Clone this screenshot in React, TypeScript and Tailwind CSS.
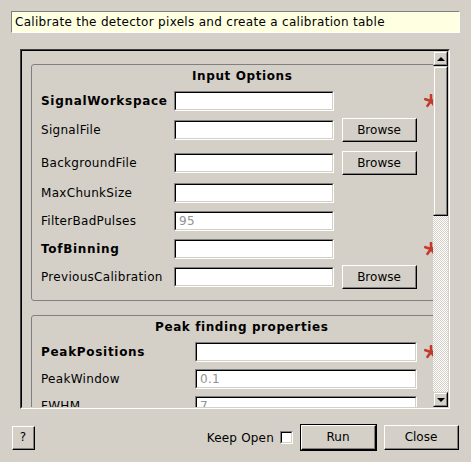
import React from "react";

function Star() {
  const arms = [-90, -18, 54, 126, 198];
  return (
    <svg width="14" height="14" viewBox="0 0 14 14" className="shrink-0 block">
      <g stroke="#c4392b" strokeWidth="2.6" strokeLinecap="round">
        {arms.map((a) => {
          const r = (a * Math.PI) / 180;
          return <line key={a} x1={7} y1={7} x2={7 + Math.cos(r) * 6} y2={7 + Math.sin(r) * 6} />;
        })}
      </g>
    </svg>
  );
}

function Input({ w, value }: { w: string; value?: string }) {
  return (
    <div className={`${w} h-[20px] shrink-0 border border-t-[#808080] border-l-[#808080] border-r-white border-b-white`}>
      <div className="w-full h-full border border-t-black border-l-black border-r-[#d4d0c8] border-b-[#d4d0c8] bg-white flex items-center pl-[3px] text-[#929292] tracking-[0.3px]">
        {value}
      </div>
    </div>
  );
}

function Button({ w, h, label, def }: { w: string; h: string; label: string; def?: boolean }) {
  const inner = (
    <div className="w-full h-full border border-t-white border-l-white border-r-black border-b-black">
      <div className="w-full h-full border-r border-b border-[#808080] flex items-center justify-center">{label}</div>
    </div>
  );
  if (def) {
    return <div className={`${w} ${h} shrink-0 border border-black`}>{inner}</div>;
  }
  return <div className={`${w} ${h} shrink-0`}>{inner}</div>;
}

function Row({
  label,
  bold,
  mt,
  labelW,
  inputW,
  value,
  browse,
  star,
}: {
  label: string;
  bold?: boolean;
  mt: string;
  labelW: string;
  inputW: string;
  value?: string;
  browse?: boolean;
  star?: boolean;
}) {
  return (
    <div className={`${mt} h-[24px] flex items-center shrink-0`}>
      <div className={`${labelW} shrink-0 whitespace-nowrap ${bold ? "font-bold tracking-[0.7px]" : "tracking-[0.3px]"}`}>{label}</div>
      <Input w={inputW} value={value} />
      {browse !== undefined && (
        <div className="ml-[8px] w-[75px] shrink-0">{browse && <Button w="w-[75px]" h="h-[24px]" label="Browse" />}</div>
      )}
      {star && (
        <div className="ml-[7px] shrink-0">
          <Star />
        </div>
      )}
    </div>
  );
}

function Arrow({ up }: { up?: boolean }) {
  return (
    <div className="w-[15px] h-[15px] shrink-0 border border-t-[#d4d0c8] border-l-[#d4d0c8] border-r-black border-b-black">
      <div className="w-full h-full border border-t-white border-l-white border-r-[#808080] border-b-[#808080] flex items-center justify-center">
        {up ? (
          <div className="w-0 h-0 border-l-[4px] border-r-[4px] border-b-[4px] border-l-transparent border-r-transparent border-b-black" />
        ) : (
          <div className="w-0 h-0 border-l-[4px] border-r-[4px] border-t-[4px] border-l-transparent border-r-transparent border-t-black" />
        )}
      </div>
    </div>
  );
}

export default function App() {
  return (
    <div className="w-[471px] h-[462px] bg-[#d4d0c8] pt-[11px] font-['DejaVu_Sans',sans-serif] text-[12px] text-black overflow-hidden">
      <div className="ml-[11px] w-[449px] h-[22px] border border-t-[#808080] border-l-[#808080] border-r-white border-b-white bg-[#ffffe1] flex items-center pl-[3px] whitespace-nowrap tracking-[0.3px]">
        Calibrate the detector pixels and create a calibration table
      </div>

      <div className="ml-[20px] mt-[16px] w-[430px] h-[360px] border border-t-[#404040] border-l-[#404040] border-r-white border-b-white">
        <div className="w-full h-full border border-t-black border-l-black border-r-[#d4d0c8] border-b-[#d4d0c8] flex">
          <div className="w-[411px] h-full overflow-hidden shrink-0">
            <div className="w-[415px] pl-[9px] pt-[13px]">
              <div className="w-[406px] h-[237px] border border-[#808080] rounded-[3px] pl-[9px] flex flex-col">
                <div className="mt-[4px] h-[14px] leading-[14px] font-bold tracking-[0.6px] pl-[151px] whitespace-nowrap">Input Options</div>
                <Row mt="mt-[6px]" label="SignalWorkspace" bold labelW="w-[133px]" inputW="w-[160px]" browse={false} star />
                <Row mt="mt-[5px]" label="SignalFile" labelW="w-[133px]" inputW="w-[160px]" browse />
                <Row mt="mt-[9px]" label="BackgroundFile" labelW="w-[133px]" inputW="w-[160px]" browse />
                <Row mt="mt-[6px]" label="MaxChunkSize" labelW="w-[133px]" inputW="w-[160px]" />
                <Row mt="mt-[4px]" label="FilterBadPulses" labelW="w-[133px]" inputW="w-[160px]" value="95" />
                <Row mt="mt-[4px]" label="TofBinning" bold labelW="w-[133px]" inputW="w-[160px]" browse={false} star />
                <Row mt="mt-[4px]" label="PreviousCalibration" labelW="w-[133px]" inputW="w-[160px]" browse />
              </div>
              <div className="mt-[14px] w-[406px] h-[200px] border border-[#808080] rounded-[3px] pl-[9px] flex flex-col">
                <div className="mt-[4px] h-[14px] leading-[14px] font-bold tracking-[0.6px] pl-[114px] whitespace-nowrap">Peak finding properties</div>
                <Row mt="mt-[6px]" label="PeakPositions" bold labelW="w-[154px]" inputW="w-[222px]" star />
                <Row mt="mt-[3px]" label="PeakWindow" labelW="w-[154px]" inputW="w-[222px]" value="0.1" />
                <Row mt="mt-[3px]" label="FWHM" labelW="w-[154px]" inputW="w-[222px]" value="7" />
              </div>
            </div>
          </div>
          <div className="w-[15px] h-full flex flex-col shrink-0">
            <Arrow up />
            <div className="h-[150px] shrink-0 border border-t-[#d4d0c8] border-l-[#d4d0c8] border-r-black border-b-black">
              <div className="w-full h-full border border-t-white border-l-white border-r-[#808080] border-b-[#808080]" />
            </div>
            <div className="flex-1 bg-[repeating-conic-gradient(#d4d0c8_0%_25%,#ffffff_0%_50%)] bg-[length:2px_2px]" />
            <Arrow />
          </div>
        </div>
      </div>

      <div className="mt-[15px] h-[27px] flex items-center pl-[12px] pr-[12px]">
        <Button w="w-[23px]" h="h-[24px]" label="?" />
        <div className="flex-1" />
        <div className="whitespace-nowrap tracking-[0.2px]">Keep Open</div>
        <div className="ml-[6px] w-[13px] h-[13px] border border-t-[#808080] border-l-[#808080] border-r-white border-b-white">
          <div className="w-full h-full border border-t-black border-l-black border-r-[#d4d0c8] border-b-[#d4d0c8] bg-white" />
        </div>
        <div className="ml-[7px]">
          <Button w="w-[77px]" h="h-[27px]" label="Run" def />
        </div>
        <div className="ml-[7px]">
          <Button w="w-[75px]" h="h-[25px]" label="Close" />
        </div>
      </div>
    </div>
  );
}
